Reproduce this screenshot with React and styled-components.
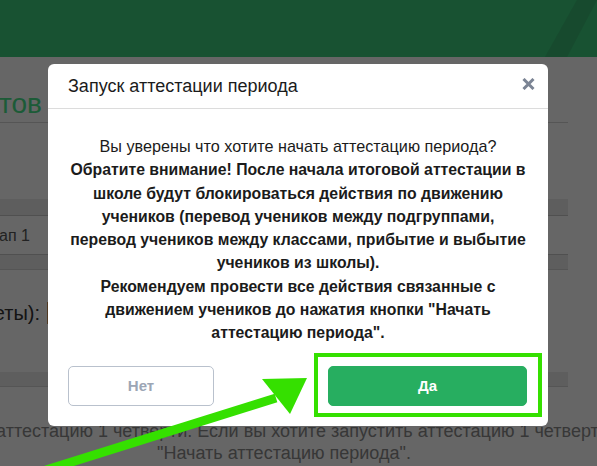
import React from 'react';
import styled, { createGlobalStyle } from 'styled-components';

const GlobalStyle = createGlobalStyle`
    html, body {
        margin: 0;
        padding: 0;
    }
    body {
        width: 597px;
        height: 466px;
        overflow: hidden;
        background: #ffffff;
        font-family: "Liberation Sans", Arial, sans-serif;
    }
`;

const Page = styled.div`
    width: 597px;
    height: 466px;
    overflow: hidden;
`;

const Header = styled.header`
    position: relative;
    z-index: 2;
    height: 57px;
    background: #185232;
    overflow: hidden;
`;

const HeaderStripe = styled.svg`
    position: absolute;
    top: 0;
    right: 0;
    width: 60px;
    height: 57px;
`;

const Main = styled.main`
    width: 568px;
`;

const TitleRow = styled.div`
    height: 35px;
    padding-top: 30px;
    border-bottom: 1px solid #d5d5d5;
    display: flex;
    align-items: flex-start;
`;

const Clipped = styled.div`
    width: ${(p) => p.width}px;
    overflow: hidden;
    display: flex;
    justify-content: flex-end;
    white-space: nowrap;
`;

const PageTitle = styled.span`
    font-size: 28px;
    line-height: 34px;
    color: #48e38a;
`;

const Toolbar = styled.div`
    height: 76px;
`;

const Band = styled.div`
    height: ${(p) => p.h}px;
    background: #ebebeb;
    border-bottom: 1px solid ${(p) => p.line || '#d5d5d5'};
`;

const FilterRow = styled.div`
    height: 39px;
    border-bottom: 1px solid #c8c8c8;
    display: flex;
    align-items: center;
    padding-top: 2px;
    box-sizing: border-box;
    font-size: 16px;
    color: #555555;
`;

const InfoRow = styled.div`
    height: 102px;
    display: flex;
    align-items: flex-start;
    padding-top: 32px;
    box-sizing: border-box;
    font-size: 20px;
    color: #333333;
`;

const Badge = styled.span`
    display: inline-block;
    margin-left: 7px;
    width: 20px;
    height: 22px;
    background: #c98f55;
`;

const Notice = styled.div`
    padding-top: 33px;
    display: flex;
    flex-direction: column;
    align-items: center;
    font-size: 18px;
    line-height: 22px;
    color: #8a8a8a;
    white-space: nowrap;
`;

const Overlay = styled.div`
    position: fixed;
    inset: 0;
    z-index: 1;
    background: rgba(0, 0, 0, 0.6);
`;

const Modal = styled.div`
    position: fixed;
    z-index: 3;
    top: 64px;
    left: 48px;
    width: 500px;
    background: #ffffff;
    border-radius: 6px;
    color: #1b1b1b;
`;

const ModalHeader = styled.div`
    height: 44px;
    border-bottom: 1px solid #dcdcdc;
    display: flex;
    align-items: center;
    justify-content: space-between;
    padding: 0 13px 0 20px;
`;

const ModalTitle = styled.h4`
    margin: 0;
    font-size: 18px;
    font-weight: normal;
    color: #1b1b1b;
`;

const CloseButton = styled.button`
    border: 0;
    background: none;
    padding: 0;
    width: 14px;
    height: 14px;
    display: flex;
    align-items: center;
    justify-content: center;
    margin-top: -5px;
    cursor: pointer;
`;

const ModalBody = styled.div`
    padding: 26px 0 0;
    text-align: center;
    white-space: nowrap;
    font-size: 16.2px;
    line-height: 23.3px;
`;

const Strong = styled.strong`
    font-weight: bold;
    font-size: 15.8px;
`;

const ModalFooter = styled.div`
    display: flex;
    justify-content: space-between;
    padding: 21px 21px 20px 20px;
`;

const Button = styled.button`
    position: relative;
    height: 40px;
    width: ${(p) => (p.primary ? 199 : 146)}px;
    border-radius: 5px;
    border: 1px solid ${(p) => (p.primary ? '#27ae60' : '#b9c1cd')};
    background: ${(p) => (p.primary ? '#27ae60' : '#ffffff')};
    color: ${(p) => (p.primary ? '#ffffff' : '#9ca6b5')};
    font-family: "Liberation Sans", Arial, sans-serif;
    font-size: 15px;
    font-weight: bold;
    cursor: pointer;
`;

const Highlight = styled.span`
    position: absolute;
    top: -14px;
    bottom: -12px;
    left: -15px;
    right: -16px;
    border: 4px solid #35e000;
    pointer-events: none;
`;

const ArrowLayer = styled.svg`
    position: fixed;
    z-index: 4;
    top: 0;
    left: 0;
    width: 597px;
    height: 466px;
    pointer-events: none;
`;

const App = () => (
    <Page>
        <GlobalStyle />
        <Header>
            <HeaderStripe viewBox="0 0 60 57">
                <polygon points="40,0 60,0 30,57 8,57" fill="#174a2e" />
            </HeaderStripe>
        </Header>
        <Main>
            <TitleRow>
                <Clipped width={42}>
                    <PageTitle>Журнал итоговых результатов</PageTitle>
                </Clipped>
            </TitleRow>
            <Toolbar />
            <Band h={16} line="#c8c8c8" />
            <FilterRow>
                <Clipped width={30}>
                    <span>Этап 1</span>
                </Clipped>
            </FilterRow>
            <Band h={14} />
            <InfoRow>
                <Clipped width={40}>
                    <span>Выставлено отметок (за четверти/зачеты):</span>
                </Clipped>
                <Badge />
            </InfoRow>
            <Band h={14} />
            <Notice>
                <span>Вы не начали аттестацию 1 четверти. Если вы хотите запустить аттестацию 1 четверти, нажмите</span>
                <span>"Начать аттестацию периода".</span>
            </Notice>
        </Main>
        <Overlay />
        <Modal>
            <ModalHeader>
                <ModalTitle>Запуск аттестации периода</ModalTitle>
                <CloseButton type="button">
                    <svg width="13" height="12" viewBox="0 0 13 12">
                        <path d="M1.5 1 L11.5 11 M11.5 1 L1.5 11" stroke="#7b8494" strokeWidth="3" />
                    </svg>
                </CloseButton>
            </ModalHeader>
            <ModalBody>
                Вы уверены что хотите начать аттестацию периода?
                <br />
                <Strong>
                    Обратите внимание! После начала итоговой аттестации в
                    <br />
                    школе будут блокироваться действия по движению
                    <br />
                    учеников (перевод учеников между подгруппами,
                    <br />
                    перевод учеников между классами, прибытие и выбытие
                    <br />
                    учеников из школы).
                    <br />
                    Рекомендуем провести все действия связанные с
                    <br />
                    движением учеников до нажатия кнопки "Начать
                    <br />
                    аттестацию периода".
                </Strong>
            </ModalBody>
            <ModalFooter>
                <Button type="button">Нет</Button>
                <Button type="button" primary>
                    Да
                    <Highlight />
                </Button>
            </ModalFooter>
        </Modal>
        <ArrowLayer viewBox="0 0 597 466">
            <line x1="46" y1="470" x2="276" y2="398" stroke="#35e000" strokeWidth="9" />
            <polygon points="307,378 262,379 290,414" fill="#35e000" />
        </ArrowLayer>
    </Page>
);

export default App;
